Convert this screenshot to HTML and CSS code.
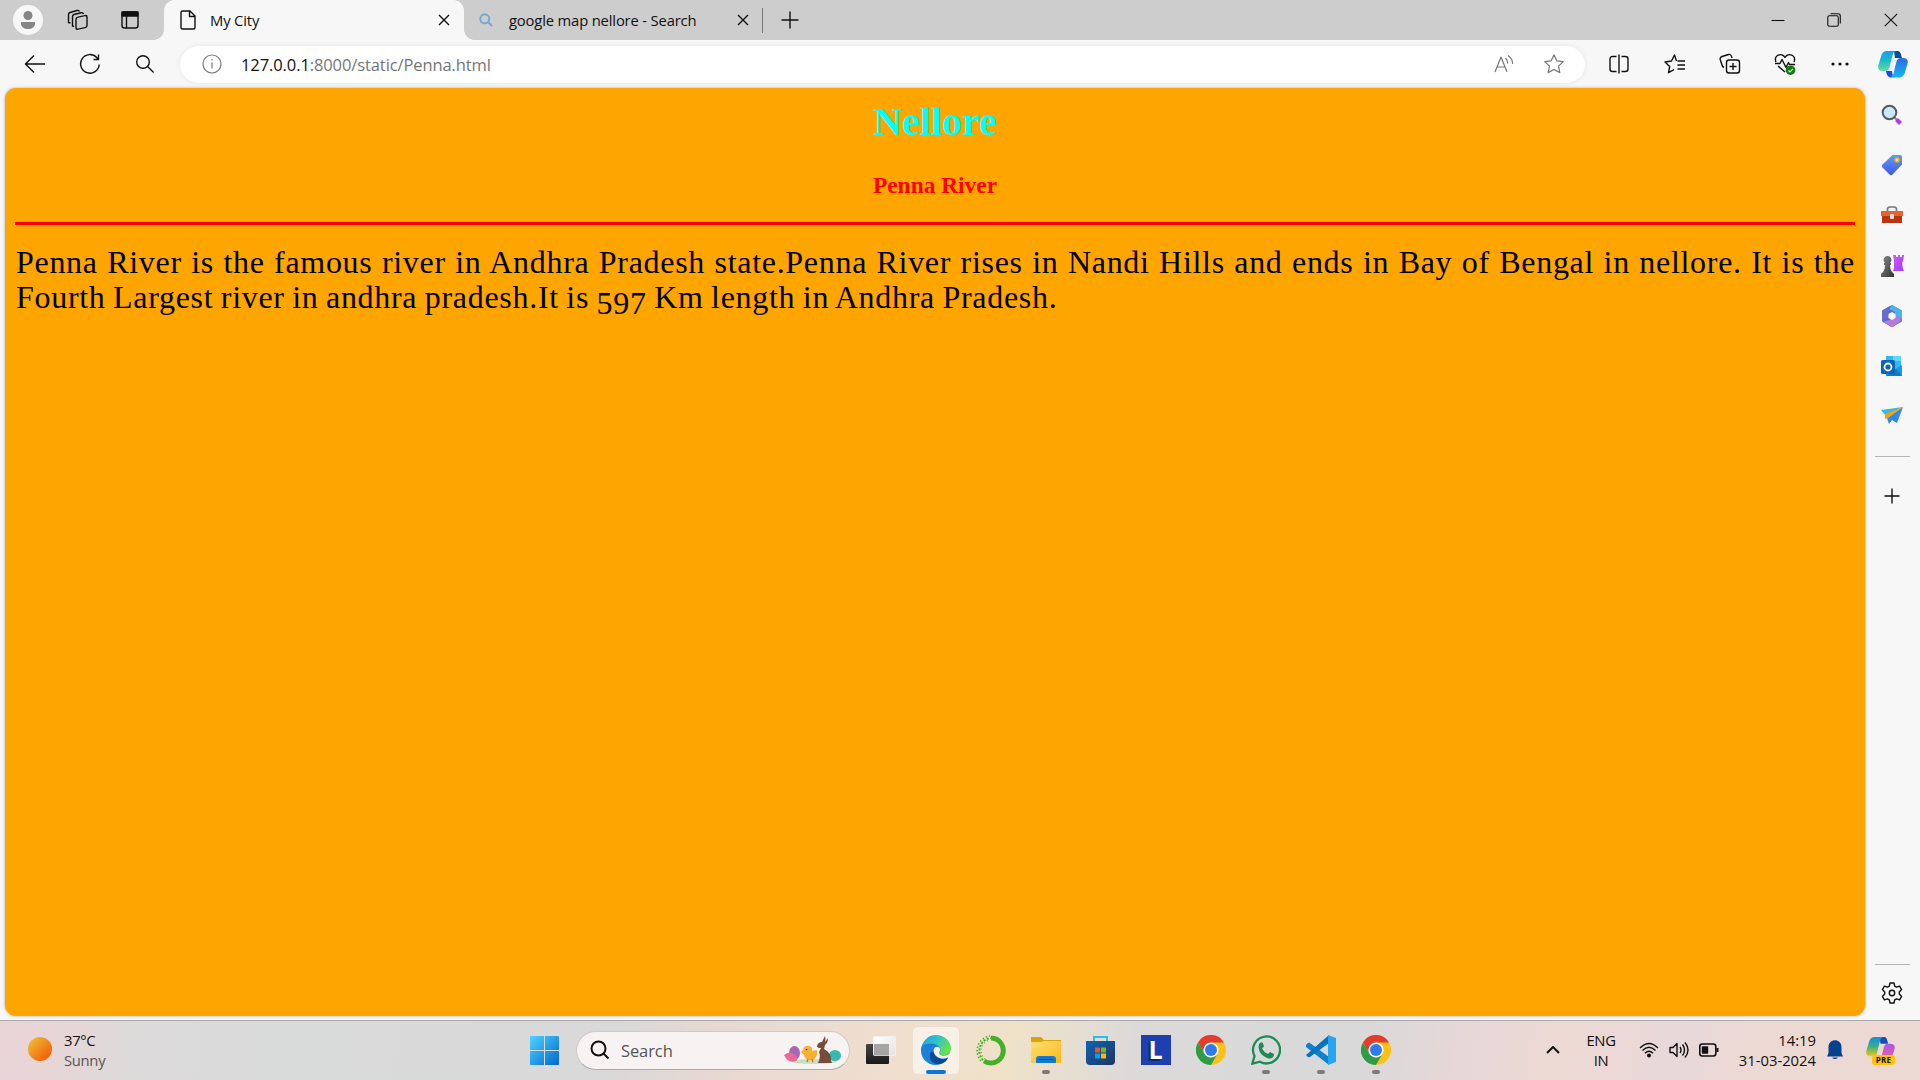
FILE: index.html
```html
<!DOCTYPE html>
<html lang="en">
<head>
<meta charset="utf-8">
<title>My City</title>
<link rel="stylesheet" href="styles.css">
</head>
<body>
<svg class="defs" width="0" height="0" aria-hidden="true">
  <defs>
    <linearGradient id="cyan" x1="0" y1="0" x2="0" y2="1"><stop offset="0" stop-color="#12a0e8"/><stop offset=".45" stop-color="#18b9cf"/><stop offset="1" stop-color="#62dc9b"/></linearGradient>
    <linearGradient id="blue" x1="0" y1="0" x2="0" y2="1"><stop offset="0" stop-color="#2b6be0"/><stop offset="1" stop-color="#13b5fa"/></linearGradient>
    <linearGradient id="win" gradientUnits="userSpaceOnUse" x1="0" y1="0" x2="29" y2="29"><stop offset="0" stop-color="#4fd3ff"/><stop offset="1" stop-color="#0069cf"/></linearGradient>
    <linearGradient id="sun" x1="0" y1="0" x2="1" y2="1"><stop offset="0" stop-color="#efc53b"/><stop offset=".8" stop-color="#f1680b"/></linearGradient>
    <linearGradient id="edgeTop" x1="0" y1="0" x2="1" y2=".5"><stop offset="0" stop-color="#1a9fe6"/><stop offset=".5" stop-color="#30c3cb"/><stop offset="1" stop-color="#6be14f"/></linearGradient>
    <linearGradient id="edgeLow" x1="0" y1="0" x2="0" y2="1"><stop offset="0" stop-color="#1b7fd6"/><stop offset="1" stop-color="#1583dc"/></linearGradient>
    <linearGradient id="folder" x1="0" y1="0" x2="1" y2="1"><stop offset="0" stop-color="#ffdf70"/><stop offset="1" stop-color="#fbb91b"/></linearGradient>
    <linearGradient id="store" x1="0" y1="0" x2="1" y2="1"><stop offset="0" stop-color="#0e64b5"/><stop offset="1" stop-color="#20355f"/></linearGradient>
    <linearGradient id="tag" x1="0" y1="0" x2="0" y2="1"><stop offset="0" stop-color="#619bee"/><stop offset="1" stop-color="#4355ef"/></linearGradient>
    <linearGradient id="rook" x1="0" y1="0" x2="1" y2="1"><stop offset="0" stop-color="#d75bfa"/><stop offset="1" stop-color="#9a3df2"/></linearGradient>
    <linearGradient id="pawn" x1="0" y1="0" x2="1" y2="1"><stop offset="0" stop-color="#8b8b8b"/><stop offset="1" stop-color="#333"/></linearGradient>
    <linearGradient id="rainbow" x1="0" y1="0" x2="0" y2="1"><stop offset="0" stop-color="#0f8eea"/><stop offset=".5" stop-color="#3fae7f"/><stop offset="1" stop-color="#f1c90c"/></linearGradient>
    <linearGradient id="violet" x1="0" y1="0" x2="0" y2="1"><stop offset="0" stop-color="#a855f0"/><stop offset="1" stop-color="#fa6a72"/></linearGradient>
    <linearGradient id="dark" x1="0" y1="0" x2="0" y2="1"><stop offset="0" stop-color="#454545"/><stop offset="1" stop-color="#191919"/></linearGradient>
    <linearGradient id="glass" x1="0" y1="0" x2="1" y2="1"><stop offset="0" stop-color="#fff"/><stop offset="1" stop-color="#e4e2e0"/></linearGradient>
    <symbol id="chrome" viewBox="0 0 30 30">
      <circle cx="15" cy="15" r="15" fill="#fbc116"/>
      <path d="M2 7.500A15 15 0 0 1 28 7.500H15L8.500 18.800Z" fill="#e33b2e"/>
      <path d="M2 7.500A15 15 0 0 0 15 30L21.500 18.800 15 22.500 8.500 18.800Z" fill="#2d9b47"/>
      <circle cx="15" cy="15" r="7.600" fill="#fff"/><circle cx="15" cy="15" r="6" fill="#2f7bee"/>
    </symbol>
  </defs>
</svg>

<header class="tabstrip">
  <div class="cell w56"><span class="avatar"><svg width="16" height="18" viewBox="0 0 16 18" fill="#858585"><circle cx="8" cy="4.500" r="4.500"/><path d="M1 11h14v1.500C15 16 12 18 8 18s-7-2-7-5.500Z"/></svg></span></div>
  <div class="cell w44"><svg width="22" height="22" viewBox="0 0 22 22" class="line"><rect x="9" y="7.500" width="11" height="12" rx="2" transform="skewY(-12) translate(0 3)"/><path d="M7 17.500 5.500 17V7.500Q5.500 6 7 5.500L14 3.700Q16 3.200 16.500 5M3.500 14 1.500 13.500V5.500Q1.500 4 3 3.500L10 1.500Q12 1 12.500 2.500"/></svg></div>
  <div class="cell w60"><svg width="20" height="20" viewBox="0 0 20 20" class="line"><rect x="2" y="2" width="16" height="16" rx="2.500"/><path d="M2 2h16v4H2Z" fill="#111"/><path d="M6.500 6v12"/></svg></div>
  <div class="tab tab-active">
    <svg width="16" height="20" viewBox="0 0 16 20" class="line"><path d="M2.500 1H10l5 5v11.500Q15 19 13.500 19h-11Q1 19 1 17.500v-15Q1 1 2.500 1ZM9.500 1v5.500H15"/></svg>
    <span class="tab-title title-city">My City</span>
    <svg width="12" height="12" viewBox="0 0 12 12" class="line"><path d="m1 1 10 10M11 1 1 11"/></svg>
  </div>
  <div class="tab tab-idle">
    <svg width="14" height="14" viewBox="0 0 14 14" fill="none" stroke="#74a8d6" stroke-width="2"><circle cx="5.800" cy="5.800" r="4.500"/><path d="m9 9 4 4"/></svg>
    <span class="tab-title title-map">google map nellore - Search</span>
    <svg width="12" height="12" viewBox="0 0 12 12" class="line"><path d="m1 1 10 10M11 1 1 11"/></svg>
  </div>
  <div class="cell w54"><svg width="18" height="18" viewBox="0 0 18 18" class="line"><path d="M9 .5v17M.5 9h17"/></svg></div>
  <div class="window-controls">
    <div class="cell w56"><svg width="14" height="14" viewBox="0 0 14 14" class="line thin"><path d="M.5 7.500h13"/></svg></div>
    <div class="cell w56"><svg width="14" height="14" viewBox="0 0 14 14" class="line thin"><rect x=".8" y="2.800" width="10.500" height="10.500" rx="1.500"/><path d="M3.500.8H11Q13.300.8 13.300 3v7.500"/></svg></div>
    <div class="cell w58"><svg width="14" height="14" viewBox="0 0 14 14" class="line thin"><path d="m.8.8 12.400 12.400M13.200.8.8 13.200"/></svg></div>
  </div>
</header>

<nav class="toolbar">
  <div class="cell w55"><svg width="22" height="20" viewBox="0 0 22 20" class="line"><path d="M21 10H1.500M10 1.500 1.500 10l8.500 8.500"/></svg></div>
  <div class="cell w55"><svg width="22" height="22" viewBox="0 0 22 22" class="line"><path d="M20.200 11.500A9.300 9.300 0 1 1 17.700 4.500L19.500 6.500M19.500 1.500v5h-5"/></svg></div>
  <div class="cell w55"><svg width="20" height="20" viewBox="0 0 20 20" class="line"><circle cx="8" cy="8" r="6.300"/><path d="m12.600 12.600 6 6"/></svg></div>
  <div class="address">
    <svg width="20" height="20" viewBox="0 0 20 20" class="line grey"><circle cx="10" cy="10" r="9"/><path d="M10 8.500v6M10 5v1.500"/></svg>
    <span class="url"><b>127.0.0.1</b>:8000/static/Penna.html</span>
    <svg width="20" height="20" viewBox="0 0 20 20" class="line grey"><path d="m1 18 6-15 6 15M3 13h8M11.500 4q2.500 2.500 2.200 5.500M14 1.500q5 3.500 4.500 8.500"/></svg>
    <svg width="22" height="22" viewBox="0 0 22 22" class="line grey star"><path d="m11 1.800 2.800 6 6.500.8-4.800 4.500 1.300 6.500L11 16.500l-5.800 3.100 1.300-6.500L1.700 8.600l6.500-.8Z"/></svg>
  </div>
  <div class="actions">
    <div class="cell w56"><svg width="20" height="20" viewBox="0 0 20 20" class="line"><path d="M10 .5v19M7.500 2.500h-4Q1 2.500 1 5v10q0 2.500 2.500 2.500h4M12.500 2.500h4Q19 2.500 19 5v10q0 2.500-2.500 2.500h-4"/></svg></div>
    <div class="cell w55"><svg width="22" height="20" viewBox="0 0 22 20" class="line"><path d="M12.500 7 10.500 1 7.500 7 1 8l4.700 4.500-1.200 6.200 5.500-3M13.500 7H21M13.500 11H21M13.500 15H21"/></svg></div>
    <div class="cell w55"><svg width="22" height="22" viewBox="0 0 22 22" class="line"><rect x="7.500" y="7" width="13" height="13" rx="2.500"/><path d="M14 10v7M10.500 13.500h7M5 14.500Q3.500 14 3 12L1.200 6.500Q.7 4.300 3 3.500L9.500 1.500Q12 1 12.500 3.500L13 5"/></svg></div>
    <div class="cell w55"><svg width="22" height="22" viewBox="0 0 22 22" class="line"><path d="M2 9C-1 2 8-1 11 4.500 14-1 23 2 20 9M1 10.500h5l2-4 4 8 2.500-5 1 2H21M4 13l7 6"/><circle cx="16.500" cy="17.200" r="4.800" fill="#107c10" stroke="none"/><path d="m14.500 17.500 1.500 1.400 3-3" stroke="#fff" stroke-width="1.200"/></svg></div>
    <div class="cell w55"><svg width="18" height="4" viewBox="0 0 18 4" fill="#111"><circle cx="2" cy="2" r="1.600"/><circle cx="9" cy="2" r="1.600"/><circle cx="16" cy="2" r="1.600"/></svg></div>
    <div class="cell w51"><svg width="30" height="27" viewBox="0 0 30 27"><path d="M16 0h4q2 0 2.700 2.500L24 7h-7Z" fill="#07519c"/><path d="M8 20H14l1 6q-6 2-7-6Z" fill="#174fe3"/><path d="M9 0H18Q15 1 14.500 4L11.500 16Q10.800 20 7 20H5Q-1 20 .4 14L3.500 4Q4.800 0 9 0Z" fill="url(#cyan)"/><path d="M21 26.500H12Q15 25.500 15.500 22.500L18.500 10.500Q19.300 7 23 7H25Q31 7 29.500 13L26.500 22.500Q25 26.500 21 26.500Z" fill="url(#blue)"/></svg></div>
  </div>
</nav>

<div class="workspace">
  <main class="page">
    <h1>Nellore</h1>
    <h3>Penna River</h3>
    <hr>
    <p>Penna River is the famous river in Andhra Pradesh state.Penna River rises in Nandi Hills and ends in Bay of Bengal in nellore. It is the Fourth Largest river in andhra pradesh.It is <span class="oldstyle">597</span> Km length in Andhra Pradesh.</p>
  </main>
  <aside class="sidebar">
    <div class="side-cell"><svg width="22" height="22" viewBox="0 0 22 22"><path d="m13.500 13.500 3 3" stroke="#888" stroke-width="2"/><path d="m15.500 15.500 4 4" stroke="#b438ed" stroke-width="4"/><circle cx="8.500" cy="8.500" r="6.800" fill="#c9e8fb" stroke="#595959" stroke-width="2"/></svg></div>
    <div class="side-cell"><svg width="22" height="22" viewBox="0 0 22 22"><path d="M11.500 1H19q2 0 2 2v7.500L11.500 20.500q-1.500 1.300-3 0L1.500 13.500q-1.300-1.500 0-3Z" fill="url(#tag)"/><circle cx="16" cy="6" r="2" fill="#f4e8b2" stroke="#edb80b" stroke-width="1.500"/></svg></div>
    <div class="side-cell"><svg width="22" height="20" viewBox="0 0 22 20"><path d="M6.500 6V4.500Q6.500 2 9 2h4q2.500 0 2.500 2.500V6" fill="none" stroke="#777" stroke-width="1.700"/><path d="M0 6h22v5H0Z" fill="#e9632b"/><path d="M1 11h20v7H1Z" fill="#bb3410"/><rect x="9" y="9" width="4" height="5" rx="1" fill="#ddd"/></svg></div>
    <div class="side-cell"><svg width="24" height="24" viewBox="0 0 24 24"><path d="M13 1h3v2h2V1h2v2h2V1h2l-1 6-1 2 1 6 1 2H13l1-3V7Z" fill="url(#rook)"/><path d="M5 11H4V9h1a4 4 0 1 1 5 0h1v2h-1q0 6 4 9v3H1v-3q4-3 4-9Z" fill="url(#pawn)"/></svg></div>
    <div class="side-cell"><svg width="22" height="24" viewBox="0 0 22 24"><path d="m11 1 9 5q1 .6 1 2v8q0 1.400-1 2l-8 4.700q-1 .5-2 0L2 18q-1-.6-1-2V8q0-1.400 1-2Z" fill="#526ae0"/><path d="m11 1 9 5q1 .6 1 2v7L14 11V8L8 5Z" fill="#48b5e6"/><path d="M21 15.500 12 22.700q-1 .5-2 0L2 18l9-3 4-4Z" fill="#b27bdc"/><path d="M1 16V8q0-1.400 1-2l7-4-1 13Z" fill="#676bc9"/><path d="m11 8 3.500 2v4L11 16l-3.500-2v-4Z" fill="#fff"/></svg></div>
    <div class="side-cell"><svg width="22" height="22" viewBox="0 0 22 22"><path d="M5 1h15v14H5Z" fill="#35b9ed"/><path d="M12 1h8v5h-8Z" fill="#64d8fc"/><path d="M5 10l8 5 8-5v11H5Z" fill="#159bdc"/><path d="m5 21 10-7 6 7Z" fill="#127bc5"/><rect y="5" width="14" height="14" rx="1.500" fill="#0867bc"/><circle cx="7" cy="12" r="3.500" fill="none" stroke="#fff" stroke-width="1.800"/></svg></div>
    <div class="side-cell"><svg width="22" height="18" viewBox="0 0 22 18"><path d="M0 3 22 0 5 9Z" fill="#36b8e9"/><path d="M22 0 16 16l-5-3-3 4-2-6Z" fill="#2e88e9"/><path d="M22 0 4 7v5l3-1Z" fill="#f5a00e"/></svg></div>
    <div class="rule"></div>
    <div class="side-plus"><svg width="16" height="16" viewBox="0 0 16 16" class="line"><path d="M8 .5v15M.5 8h15"/></svg></div>
    <div class="rule rule-low"></div>
    <div class="side-gear"><svg width="22" height="22" viewBox="0 0 22 22" class="line"><path d="M9 1h4l.7 3.200 1.800 1 3.100-1 2 3.400L18.300 9.900v2.200l2.300 2.300-2 3.400-3.100-1-1.800 1L13 21H9l-.7-3.200-1.800-1-3.100 1-2-3.400 2.300-2.300V9.900L1.400 7.600l2-3.400 3.100 1 1.800-1Z"/><circle cx="11" cy="11" r="2.700"/></svg></div>
  </aside>
</div>

<footer class="taskbar">
  <div class="weather">
    <svg width="24" height="24" viewBox="0 0 24 24"><circle cx="12" cy="12" r="12" fill="url(#sun)"/></svg>
    <div class="two-line"><span>37°C</span><span class="muted">Sunny</span></div>
  </div>
  <div class="cell w64"><svg width="29" height="29" viewBox="0 0 29 29" fill="url(#win)"><path d="M0 1q0-1 1-1h13v14H0ZM15 0h13q1 0 1 1v13H15ZM0 15h14v14H1q-1 0-1-1ZM15 15h14v13q0 1-1 1H15Z"/></svg></div>
  <div class="search">
    <svg width="20" height="20" viewBox="0 0 20 20" class="line bold"><circle cx="8.500" cy="8.500" r="7"/><path d="m13.500 13.500 5 5"/></svg>
    <span class="search-label">Search</span>
    <svg width="58" height="28" viewBox="0 0 58 28"><ellipse cx="31" cy="25.500" rx="23" ry="2.500" fill="#c7dfbd"/><ellipse cx="11.500" cy="17" rx="5.500" ry="7" fill="#a866b4"/><path d="M1 19q6-5 11 0 4 4 1 6Q5 28 1 19Z" fill="#ea6a97"/><path d="M20 14q1-5 6-4 4 1 3 5l5-1q1 8-5 10-7 1-8-5l-3-3Z" fill="#f9af30"/><circle cx="23.500" cy="13.500" r=".8" fill="#333"/><path d="m25 23-1 3m5-3 1 3" stroke="#e56c16" stroke-width="1.300"/><ellipse cx="52" cy="19.500" rx="6" ry="5.500" fill="#35b9b2"/><path d="M34 10Q35 6 39 6L42 0Q43 3 42 6L45 2Q45 7 42 9L41 13Q49 17 48 25L49 27H35Q38 21 36 16L38 12Q34 12 34 10Z" fill="#7a4a3a"/></svg>
  </div>
  <div class="cell w62"><svg width="30" height="28" viewBox="0 0 30 28"><rect y="8" width="23" height="20" rx="1" fill="url(#dark)"/><rect x="7.500" y=".5" width="22" height="19" rx="1" fill="url(#glass)" stroke="#f4f2f0"/><path d="M8 8h15v11.500H8Z" fill="#a5a5a5"/></svg></div>
  <div class="app app-open wide"><svg width="30" height="30" viewBox="0 0 30 30"><circle cx="14.500" cy="15.500" r="14.500" fill="url(#edgeLow)"/><path d="M10 17C6 25 13 31 21 28.500 24 27.500 26 25 27 23 22 26 14 23 13 16Z" fill="#0c4a94"/><path d="M12.500 16C12.500 11 18 10.500 19 14 19.500 16 17.500 17.500 19 19.500 21 21.500 27 21 30 17V22L27 22.500C21 25.500 13 22 12.500 16Z" fill="#f9f1e8"/><path d="M1 11C4 3 9 0 15 0 24 0 30 7 30 13.500 30 18 26 20.500 22.500 20.500 19.500 20.500 18 19 19 17 20.500 13 17 9 11 8.500 7 8.200 3 9 1 11Z" fill="url(#edgeTop)"/></svg></div>
  <div class="app"><svg width="30" height="31" viewBox="0 0 30 31" fill="none" stroke="#43b02a"><path d="M15 3a12.500 12.500 0 1 1-7 23" stroke-width="5"/><path d="M7 25A13 13 0 0 1 15 3" stroke-width="2" stroke-dasharray="2 1.500"/><path d="M5 26A15 15 0 0 1 14 1" stroke-width="1.500" stroke-dasharray="1.500 2"/><path d="M9 24A11 11 0 0 1 13 5" stroke-width="1.300" stroke-dasharray="1 2.500"/></svg></div>
  <div class="app running"><svg width="30" height="28" viewBox="0 0 30 28"><path d="M0 1h10l3 3h17v10H0Z" fill="#e0a00a"/><path d="M0 6h10l3-1h17v22H0Z" fill="url(#folder)"/><path d="M5 27v-4q0-3 3-3h14q3 0 3 3v4Z" fill="#1379d1"/><path d="M8 23.500h14" stroke="#064a92"/></svg></div>
  <div class="app"><svg width="29" height="31" viewBox="0 0 29 31"><path d="M8 6V2h13v4" fill="none" stroke="#28bdf5" stroke-width="2"/><path d="M0 6h29v20q0 4-4 4H4q-4 0-4-4Z" fill="url(#store)"/><path d="M9 12.500h5v5H9Z" fill="#f25022"/><path d="M15 12.500h5v5h-5Z" fill="#7fba00"/><path d="M9 18.500h5v5H9Z" fill="#00a4ef"/><path d="M15 18.500h5v5h-5Z" fill="#ffb900"/></svg></div>
  <div class="app"><span class="letter-tile">L</span></div>
  <div class="app"><svg width="30" height="30"><use href="#chrome"/></svg></div>
  <div class="app running"><svg width="30" height="30" viewBox="0 0 30 30"><path d="M1.300 28.700 3.500 21A13.500 13.500 0 1 1 9 26.700Z" fill="none" stroke="#1c8b57" stroke-width="2.300"/><path d="M9 8q2-1.500 3 .5l1 3-2 2q2 4 6 5.500l2-2 4 2q0 5-6 4.500Q8 20 7.500 12 7.500 9 9 8Z" fill="#1c8b57"/></svg></div>
  <div class="app running"><svg width="30" height="30" viewBox="0 0 30 30"><path d="M0 10q2-3 4-2l19 14v8L0 12Z" fill="#1181ce"/><path d="M0 20 23 0v8L4 22q-2 1-4-2Z" fill="#0873bd"/><path d="m22 0 8 3v24l-8 3Z" fill="#27a5f1"/></svg></div>
  <div class="app running"><svg width="30" height="30"><use href="#chrome"/></svg></div>
  <div class="tray">
    <svg width="14" height="8" viewBox="0 0 14 8" class="line bold"><path d="m1 7 6-6 6 6"/></svg>
    <div class="two-line lang"><span>ENG</span><span>IN</span></div>
    <svg width="20" height="16" viewBox="0 0 20 16" class="line"><path d="M1 6q9-9 18 0M3.500 8.500q6.500-6.500 13 0M6 11.200q4-4 8 0"/><circle cx="10" cy="13.500" r="1.300" fill="#111"/></svg>
    <svg width="20" height="18" viewBox="0 0 20 18" class="line"><path d="M1 6.500h3l4-4v13l-4-4H1ZM11 6q2 3 0 6M13.500 3.500q4 5.500 0 11M16 1.500q6 7.500 0 15"/></svg>
    <svg width="20" height="14" viewBox="0 0 20 14" class="line"><rect x=".8" y="1" width="16" height="12" rx="2.500" stroke-width="1.600"/><path d="M3.500 4h5v6h-5Z" fill="#111"/><path d="M18.500 5v4" stroke-width="2"/></svg>
    <div class="two-line clock"><span>14:19</span><span>31-03-2024</span></div>
    <svg width="16" height="20" viewBox="0 0 16 20" fill="#06418e"><path d="M1.500 7C1.500-2 14.500-2 14.500 7v6L16 16.500H0L1.500 13ZM5 17.500h6q-3 3-6 0Z"/></svg>
    <div class="pre"><svg width="29" height="26" viewBox="0 0 30 27"><path d="M14 0h5q2 0 2.700 2.500L23 7h-8Z" fill="#1748bd"/><path d="M9 0H18Q15 1 14.500 4L11.500 16Q10.800 20 7 20H5Q-1 20 .4 14L3.500 4Q4.800 0 9 0Z" fill="url(#rainbow)"/><path d="M21 26.500H12Q15 25.500 15.500 22.500L18.500 10.500Q19.300 7 23 7H25Q31 7 29.500 13L26.500 22.500Q25 26.500 21 26.500Z" fill="url(#violet)"/></svg><span class="pre-badge">PRE</span></div>
  </div>
</footer>
</body>
</html>
```
FILE: styles.css
```css
* { box-sizing: border-box; }
body {
  margin: 0;
  width: 1920px;
  height: 1080px;
  overflow: hidden;
  display: flex;
  flex-direction: column;
  background: #f7f7f7;
  color: #111;
  font-family: "Open Sans", "Noto Sans", sans-serif;
}
svg { display: block; flex: none; }
.defs { position: absolute; }
.line { fill: none; stroke: #111; stroke-width: 1.4; stroke-linejoin: round; }
.thin { stroke-width: 1.1; }
.bold { stroke-width: 2; }
.grey { stroke: #777; stroke-width: 1.2; }

.cell { display: flex; align-items: center; justify-content: center; flex: none; }
.w44 { width: 44px; }
.w51 { width: 51px; }
.w54 { width: 53px; }
.w55 { width: 55px; }
.w56 { width: 56px; }
.w58 { width: 58px; }
.w60 { width: 60px; }
.w62 { width: 62px; }
.w64 { width: 64px; }

.tabstrip { height: 40px; flex: none; display: flex; background: #cdcdcd; }
.avatar { width: 30px; height: 30px; border-radius: 50%; background: #f7f7f7; display: flex; align-items: center; justify-content: center; }
.tab { display: flex; align-items: center; font-size: 14.8px; flex: none; }
.tab-title { flex: 1; white-space: nowrap; margin-bottom: 1px; }
.tab-active {
  width: 320px;
  padding: 0 24px 0 26px;
  margin-left: -6px;
  background:
    radial-gradient(circle at 0 0, #cdcdcd 9.500px, #f7f7f7 10px) 0 30px / 10px 10px no-repeat,
    radial-gradient(circle at 100% 0, #cdcdcd 9.500px, #f7f7f7 10px) 310px 30px / 10px 10px no-repeat,
    linear-gradient(#f7f7f7, #f7f7f7) 10px 10px / 300px 30px no-repeat,
    radial-gradient(circle at 10px 10px, #f7f7f7 9.500px, transparent 10px) 10px 0 / 10px 10px no-repeat,
    radial-gradient(circle at 0 10px, #f7f7f7 9.500px, transparent 10px) 300px 0 / 10px 10px no-repeat,
    linear-gradient(#f7f7f7, #f7f7f7) 20px 0 / 280px 10px no-repeat;
}
.title-city { margin-left: 14px; letter-spacing: -.15px; }
.tab-idle { width: 289px; padding: 0 14px 0 5px; position: relative; }
.tab-idle::after { content: ""; position: absolute; right: 0; top: 8px; width: 1px; height: 25px; background: #777; }
.title-map { margin-left: 16px; letter-spacing: -.17px; }
.window-controls { display: flex; margin-left: auto; }

.toolbar { height: 48px; flex: none; display: flex; align-items: center; padding-left: 7px; }
.address {
  width: 1405px; height: 37px; margin-left: 8px; padding: 0 20px 0 22px;
  border-radius: 19px; background: #fff; box-shadow: 0 0 4px #e3e3e3;
  display: flex; align-items: center; flex: none;
}
.url { flex: 1; margin-left: 19px; font-size: 16.500px; color: #767676; letter-spacing: -.1px; }
.url b { font-weight: 400; color: #111; }
.star { margin-left: 29px; }
.actions { display: flex; align-items: center; margin-left: 6px; }

.workspace { height: 932px; flex: none; display: flex; padding-left: 5px; }
.page {
  width: 1860px; height: 928px; flex: none; padding: 10px;
  border-radius: 11px; background: #ffa500; box-shadow: 0 0 3px #a8a8a8;
  font-family: "Liberation Serif", serif; color: #000;
}
.page h1 { margin: 0 0 27px; font-size: 40px; line-height: 47px; text-align: center; color: #00ffff; }
.page h3 { margin: 0; font-size: 23.400px; line-height: 27px; text-align: center; color: #f00; }
.page hr { margin: 23px 0 20px; height: 3px; border: 0; background: #f00; }
.page p { margin: 0 0 0 1px; font-size: 32px; line-height: 35px; text-align: justify; letter-spacing: .7px; word-spacing: -1.200px; }
.oldstyle { position: relative; top: 6px; }

.sidebar { width: 55px; padding: 2px 1px 0 0; display: flex; flex-direction: column; align-items: center; }
.side-cell { height: 50.200px; flex: none; display: flex; align-items: center; }
.rule { width: 35px; height: 1px; flex: none; background: #b5b5b5; margin-top: 15px; }
.side-plus { margin-top: 31px; }
.rule-low { margin-top: auto; }
.side-gear { margin: 17px 0 16px; }

.taskbar {
  height: 60px; flex: none; display: flex; align-items: center; border-top: 1px solid #aaa; padding-bottom: 1px;
  background: linear-gradient(100deg, #e9d4d6 0, #e8d5d6 50px, #dddada 130px, #d9dada 300px, #d9d9d9 610px, #e8d8d2 720px, #f0dfce 890px, #efe2c8 1000px, #dcdad9 1120px, #d9d9da 1340px, #e6d7d8 1440px, #edd9d3 1540px, #e9d8da 1660px, #edd9d3 1740px, #edd9d3 100%);
}
.weather { width: 512px; padding-left: 28px; display: flex; align-items: center; gap: 12px; flex: none; }
.weather > svg { margin-bottom: 2px; }
.two-line { display: flex; flex-direction: column; font-size: 14.800px; line-height: 20px; letter-spacing: -.3px; }
.muted { color: #555; }
.search {
  width: 274px; height: 39px; padding: 0 8px 0 13px; flex: none;
  border: 1px solid #d0c9c7; border-bottom-color: #aaa; border-radius: 20px; background: #f7f3f3;
  display: flex; align-items: center;
}
.search-label { flex: 1; margin-left: 11px; font-size: 16.500px; letter-spacing: -.1px; color: #555; }
.app { width: 55px; height: 58px; flex: none; display: flex; align-items: center; justify-content: center; position: relative; }
.wide { width: 48px; height: 49px; margin-right: 3px; border: 1px solid #eadfd2; border-radius: 6px; background: #f9f1e8; }
.running::after, .wide::after { content: ""; position: absolute; bottom: 5px; width: 8px; height: 4px; border-radius: 2px; background: #7e7a77; }
.wide::after { bottom: 0; width: 20px; background: #0878d4; }
.letter-tile { width: 30px; height: 30px; background: #1e3faf; color: #fff; font: bold 25px/29px "Open Sans", sans-serif; text-align: center; text-shadow: -2px 2px #102768; }
.tray { flex: 1; display: flex; align-items: center; padding-left: 143px; }
.lang { width: 44px; margin: 0 16px 0 19px; text-align: center; }
.tray > svg + svg { margin-left: 10px; }
.clock { width: 84px; margin: 0 11px 0 13px; white-space: nowrap; align-items: flex-end; letter-spacing: 0; }
.pre { margin-left: 23px; position: relative; }
.pre-badge { position: absolute; left: 6px; top: 18px; width: 23px; height: 10px; border-radius: 3px; background: #ffc408; font: bold 8px/10px "Open Sans", sans-serif; text-align: center; letter-spacing: .3px; }
```
